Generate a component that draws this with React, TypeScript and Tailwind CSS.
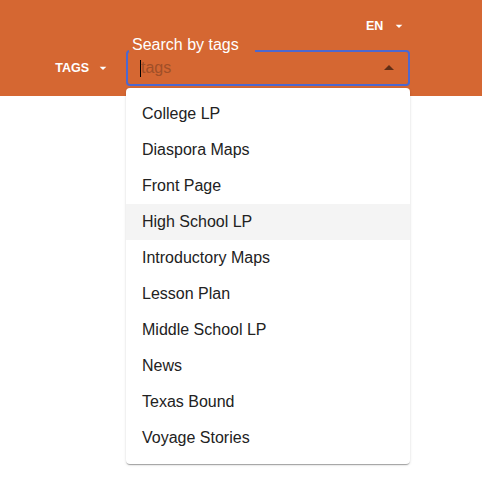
import React from "react";

const TAGS = [
  "College LP",
  "Diaspora Maps",
  "Front Page",
  "High School LP",
  "Introductory Maps",
  "Lesson Plan",
  "Middle School LP",
  "News",
  "Texas Bound",
  "Voyage Stories",
];

function CaretDown({ className = "" }: { className?: string }) {
  return (
    <svg viewBox="0 0 24 24" className={className} fill="currentColor">
      <path d="M7 10l5 5 5-5z" />
    </svg>
  );
}

function CaretUp({ className = "" }: { className?: string }) {
  return (
    <svg viewBox="0 0 24 24" className={className} fill="currentColor">
      <path d="M7 14l5-5 5 5z" />
    </svg>
  );
}

export default function App() {
  const highlighted = "High School LP";

  return (
    <div className="relative min-h-[483px] bg-white font-['Liberation_Sans',Arial,sans-serif]">
      <header className="h-[96px] bg-[#d56732] flex flex-col items-end pr-[72px]">
        <button className="mt-[18px] mr-[3px] h-[16px] flex items-center text-white font-bold text-[12.5px] leading-4">
          EN
          <CaretDown className="w-4 h-4 ml-[7.6px]" />
        </button>

        <div className="mt-[16px] flex items-center h-[36px]">
          <button className="flex items-center text-white font-bold text-[12.5px] leading-4 tracking-normal">
            TAGS
            <CaretDown className="w-4 h-4 ml-[6px]" />
          </button>

          <div className="relative ml-[15px] w-[284px] h-[36px] border-2 border-[#4d68cf] rounded-[4px] flex items-center">
            <span className="absolute left-[1px] top-[-2px] w-[126px] h-[2px] bg-[#d56732]" />
            <span className="absolute left-[4px] top-[-15px] text-[16px] leading-4 text-white whitespace-nowrap">
              Search by tags
            </span>
            <span className="ml-[12px] w-[1px] h-[17px] bg-black" />
            <span className="text-[16px] leading-[18px] text-[#a04f28]">tags</span>
            <CaretUp className="ml-auto mr-[7px] w-6 h-6 text-black/55" />
          </div>
        </div>
      </header>

      <ul className="absolute top-[88px] left-[126px] w-[284px] py-2 bg-white rounded-[4px] shadow-[0_2px_1px_-1px_rgba(0,0,0,0.2),0_1px_1px_0_rgba(0,0,0,0.14),0_1px_3px_0_rgba(0,0,0,0.12)]">
        {TAGS.map((tag) => (
          <li
            key={tag}
            className={`h-[36px] px-4 flex items-center text-[16px] text-[#222222] ${
              tag === highlighted ? "bg-[#f4f4f4]" : ""
            }`}
          >
            {tag}
          </li>
        ))}
      </ul>
    </div>
  );
}
